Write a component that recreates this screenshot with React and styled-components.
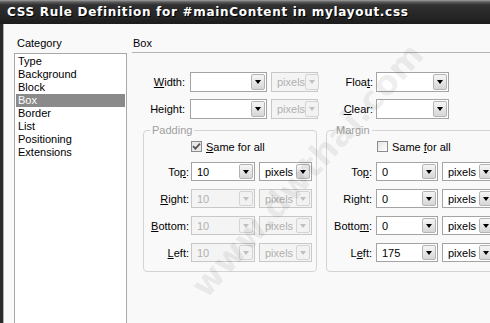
import React from 'react';
import styled, { createGlobalStyle } from 'styled-components';

const Global = createGlobalStyle`
  body {
    margin: 0;
    font-family: "Liberation Sans", Arial, sans-serif;
    font-size: 11px;
    color: #000;
  }
`;

const Window = styled.div`
  position: relative;
  width: 490px;
  height: 323px;
  overflow: hidden;
  display: flex;
  flex-direction: column;
  background: #f9f9f9;
`;

const TitleBar = styled.div`
  flex: none;
  height: 24px;
  display: flex;
  align-items: center;
  padding-left: 7px;
  background: linear-gradient(to bottom, #a0a0a0 0, #5c5c5c 2px, #303030 5px, #242424 18px, #1c1c1c 100%);
  color: #fff;
  font-family: "DejaVu Sans", Verdana, sans-serif;
  font-weight: bold;
  font-size: 12px;
  letter-spacing: 0.7px;
  text-shadow: 1px 1px 0 #000;
  white-space: nowrap;
`;

const Body = styled.div`
  flex: 1;
  display: flex;
  min-height: 0;
  border-left: 3px solid #2a2a2a;
  box-shadow: inset 1px 0 0 #b0b0b0;
`;

const LeftCol = styled.div`
  flex: none;
  width: 113px;
  margin-left: 11px;
  display: flex;
  flex-direction: column;
`;

const Caption = styled.div`
  padding: 13px 0 3px 3px;
  line-height: 13px;
`;

const List = styled.ul`
  flex: 1;
  margin: 0;
  padding: 1px;
  list-style: none;
  background: #fff;
  border: 1px solid #a8a8a8;
  border-bottom: none;
`;

const Item = styled.li`
  line-height: 13px;
  padding-left: 2px;
  background: ${p => (p.$selected ? '#8a8a8a' : 'transparent')};
  color: ${p => (p.$selected ? '#fff' : '#000')};
`;

const RightCol = styled.div`
  flex: 1;
  min-width: 0;
  margin-left: 5px;
  display: flex;
  flex-direction: column;
`;

const SectionHeader = styled.div`
  padding: 13px 0 2px 1px;
  line-height: 13px;
  border-bottom: 1px solid #b4b4b4;
`;

const TopForm = styled.div`
  margin-top: 19px;
  display: flex;
  flex-direction: column;
  gap: 7px;
`;

const Row = styled.div`
  display: flex;
  align-items: center;
  height: ${p => p.$h || 20}px;
`;

const Label = styled.label`
  flex: none;
  width: ${p => p.$w}px;
  margin-left: ${p => p.$ml || 0}px;
  margin-right: ${p => p.$mr || 0}px;
  text-align: right;
  white-space: nowrap;
  color: ${p => (p.$muted ? '#9a9a9a' : '#000')};
`;

const Select = styled.div`
  flex: none;
  box-sizing: border-box;
  width: ${p => p.$w}px;
  height: ${p => p.$h || 20}px;
  margin-left: ${p => p.$ml || 0}px;
  display: flex;
  align-items: center;
  justify-content: space-between;
  padding: 0 1px 0 5px;
  border: 1px solid ${p => (p.$disabled ? '#c8c8c8' : '#a4a4a4')};
  background: ${p => (p.$disabled ? '#f4f4f4' : '#fff')};
  color: ${p => (p.$disabled ? '#b0b0b0' : '#000')};
`;

const DropButton = styled.span`
  flex: none;
  box-sizing: border-box;
  width: 14px;
  height: calc(100% - 2px);
  display: flex;
  align-items: center;
  justify-content: center;
  border: 1px solid ${p => (p.$disabled ? '#d4d4d4' : '#b4b4b4')};
  border-radius: 2px;
  background: ${p => (p.$disabled ? '#f2f2f2' : 'linear-gradient(to bottom, #f6f6f6, #d6d6d6)')};

  &::after {
    content: '';
    border-left: 3.5px solid transparent;
    border-right: 3.5px solid transparent;
    border-top: 4px solid ${p => (p.$disabled ? '#c0c0c0' : '#000')};
  }
`;

const Groups = styled.div`
  margin-top: 5px;
  padding-left: 11px;
  display: flex;
  gap: 9px;
`;

const Group = styled.fieldset`
  flex: none;
  box-sizing: border-box;
  width: 174px;
  height: 148px;
  margin: 0;
  padding: 0;
  border: 1px solid #d4d4d4;
  border-radius: 4px;
`;

const Legend = styled.legend`
  margin-left: ${p => p.$ml}px;
  padding: 0 2px;
  line-height: 13px;
  color: #a0a0a0;
`;

const CheckRow = styled.div`
  display: flex;
  align-items: center;
  gap: 4px;
  margin: 3px 0 9px ${p => p.$ml}px;
  height: 13px;
`;

const Box = styled.span`
  box-sizing: border-box;
  width: 11px;
  height: 11px;
  display: flex;
  align-items: center;
  justify-content: center;
  border: 1px solid #8c8c8c;
  background: ${p => (p.$checked ? '#e8e8e8' : 'linear-gradient(135deg, #e4e4e4, #fff)')};
`;

const Rows = styled.div`
  display: flex;
  flex-direction: column;
  gap: 8px;
`;

const Watermark = styled.div`
  position: absolute;
  left: 307px;
  top: 170px;
  transform: translate(-50%, -50%) rotate(-48deg);
  font-family: "DejaVu Sans", Verdana, sans-serif;
  font-weight: bold;
  font-size: 34px;
  color: rgba(0, 0, 0, 0.07);
  white-space: nowrap;
  pointer-events: none;
`;

function Dropdown({ value, w, h, ml, disabled }) {
  return (
    <Select $w={w} $h={h} $ml={ml} $disabled={disabled}>
      <span>{value}</span>
      <DropButton $disabled={disabled} />
    </Select>
  );
}

function Check({ checked, children, ml }) {
  return (
    <CheckRow $ml={ml}>
      <Box $checked={checked}>
        {checked && (
          <svg width="9" height="9" viewBox="0 0 9 9">
            <path d="M1 4.2 L3.4 6.6 L8 1.6" fill="none" stroke="#555" strokeWidth="1.8" />
          </svg>
        )}
      </Box>
      <span>{children}</span>
    </CheckRow>
  );
}

const categories = ['Type', 'Background', 'Block', 'Box', 'Border', 'List', 'Positioning', 'Extensions'];

const padRows = [
  { label: <>To<u>p</u>:</>, value: '10' },
  { label: <><u>R</u>ight:</>, value: '10' },
  { label: <><u>B</u>ottom:</>, value: '10' },
  { label: <><u>L</u>eft:</>, value: '10' },
];

const marginRows = [
  { label: <>To<u>p</u>:</>, value: '0' },
  { label: <>Ri<u>g</u>ht:</>, value: '0' },
  { label: <>Botto<u>m</u>:</>, value: '0' },
  { label: <>L<u>e</u>ft:</>, value: '175' },
];

export default function App() {
  return (
    <Window>
      <Global />
      <TitleBar>CSS Rule Definition for #mainContent in mylayout.css</TitleBar>
      <Body>
        <LeftCol>
          <Caption>Category</Caption>
          <List>
            {categories.map(c => (
              <Item key={c} $selected={c === 'Box'}>{c}</Item>
            ))}
          </List>
        </LeftCol>
        <RightCol>
          <SectionHeader>Box</SectionHeader>
          <TopForm>
            <Row>
              <Label $w={53} $mr={5}><u>W</u>idth:</Label>
              <Dropdown w={77} value="" />
              <Dropdown w={47} ml={4} value="pixels" disabled />
              <Label $w={51} $ml={4} $mr={3}>Floa<u>t</u>:</Label>
              <Dropdown w={73} value="" />
            </Row>
            <Row>
              <Label $w={53} $mr={5}>Height:</Label>
              <Dropdown w={77} value="" />
              <Dropdown w={47} ml={4} value="pixels" disabled />
              <Label $w={51} $ml={4} $mr={3}><u>C</u>lear:</Label>
              <Dropdown w={73} value="" />
            </Row>
          </TopForm>
          <Groups>
            <Group>
              <Legend $ml={6}>Padding</Legend>
              <Check checked ml={47}><u>S</u>ame for all</Check>
              <Rows>
                {padRows.map((r, i) => (
                  <Row key={i} $h={19}>
                    <Label $w={45} $mr={2}>{r.label}</Label>
                    <Dropdown w={64} h={19} value={r.value} disabled={i > 0} />
                    <Dropdown w={53} h={19} ml={4} value="pixels" disabled={i > 0} />
                  </Row>
                ))}
              </Rows>
            </Group>
            <Group>
              <Legend $ml={7}>Margin</Legend>
              <Check ml={50}>Same <u>f</u>or all</Check>
              <Rows>
                {marginRows.map((r, i) => (
                  <Row key={i} $h={19}>
                    <Label $w={45} $mr={4}>{r.label}</Label>
                    <Dropdown w={62} h={19} value={r.value} />
                    <Dropdown w={53} h={19} ml={4} value="pixels" />
                  </Row>
                ))}
              </Rows>
            </Group>
          </Groups>
        </RightCol>
      </Body>
      <Watermark>www.dwthai.com</Watermark>
    </Window>
  );
}
